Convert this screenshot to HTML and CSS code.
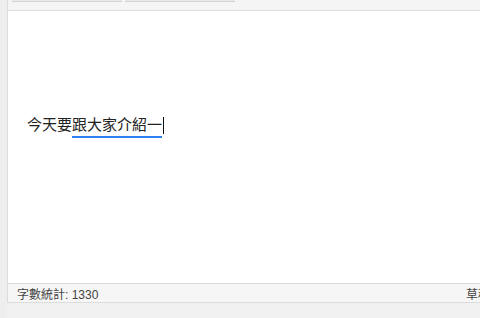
FILE: index.html
```html
<!DOCTYPE html>
<html lang="zh-Hant">
<head>
  <meta charset="UTF-8" />
  <title>編輯器</title>
  <link rel="stylesheet" href="styles.css">
</head>
<body>
  <div class="gutter"></div>
  <div class="editor">
    <div class="toolbar">
      <div class="tab"></div>
      <div class="tab"></div>
    </div>
    <div class="content">
      <p class="line">今天要<span class="compose">跟大家介紹一</span><span class="caret"></span></p>
    </div>
    <div class="statusbar">
      <span>字數統計: 1330</span>
      <span>草稿已儲存</span>
    </div>
  </div>
</body>
</html>
```

FILE: styles.css
```css
html, body {
  height: 100%;
}
body {
  margin: 0;
  display: flex;
  overflow: hidden;
  background-color: #f1f1f1;
  font-family: "Liberation Sans", "Noto Sans CJK TC", sans-serif;
  color: #333;
}
.gutter {
  width: 7px;
  flex-shrink: 0;
  background-color: #eeeeee;
}
.editor {
  width: 529px;
  flex-shrink: 0;
  height: 303px;
  display: flex;
  flex-direction: column;
  border-left: 1px solid #dcdcdc;
  box-sizing: border-box;
}
.toolbar {
  height: 10px;
  flex-shrink: 0;
  background-color: #f5f5f5;
  border-bottom: 1px solid #dedede;
  display: flex;
  gap: 3px;
  padding-left: 4px;
}
.tab {
  width: 110px;
  height: 1px;
  background-color: #e8e8e8;
  border-bottom: 1px solid #d4d4d4;
}
.content {
  flex: 1;
  background-color: #fff;
  padding: 104px 19px 0;
}
.line {
  margin: 0;
  font-size: 15px;
  line-height: 20px;
  color: #222;
  display: flex;
  align-items: flex-start;
}
.compose {
  border-bottom: 2px solid #2f7ff0;
  line-height: 20px;
  padding-bottom: 1px;
}
.caret {
  width: 1px;
  height: 17px;
  background-color: #111;
  margin: 2px 0 0 1px;
}
.statusbar {
  height: 18px;
  flex-shrink: 0;
  border-top: 1px solid #dcdcdc;
  border-bottom: 1px solid #dcdcdc;
  background-color: #f6f6f6;
  display: flex;
  justify-content: space-between;
  align-items: center;
  padding: 0 10px 0 9px;
  font-size: 12px;
  color: #444;
}
```
